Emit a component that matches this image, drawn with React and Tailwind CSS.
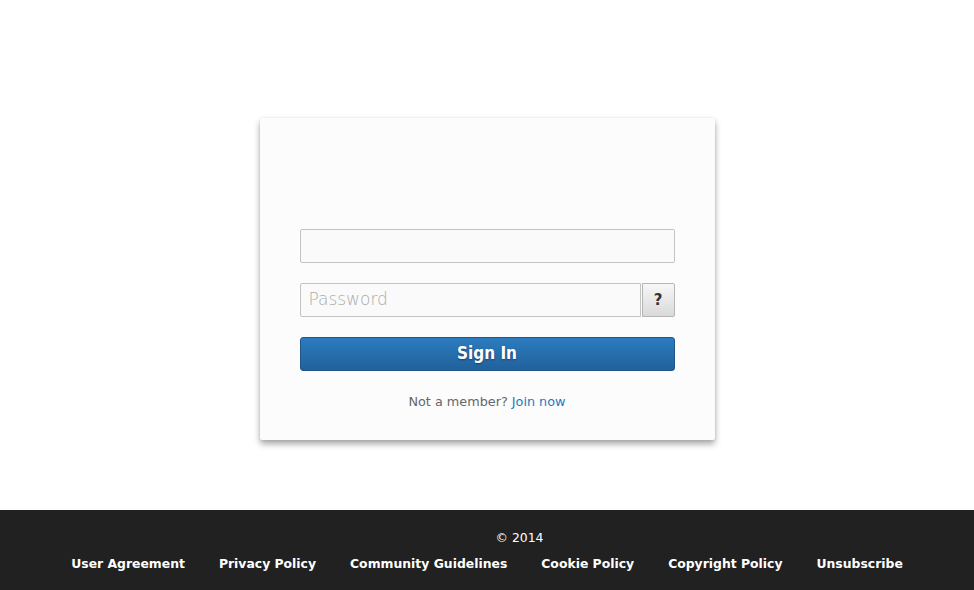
import React from 'react';

const links = ['User Agreement', 'Privacy Policy', 'Community Guidelines', 'Cookie Policy', 'Copyright Policy', 'Unsubscribe'];

const App = () => {
  return (
    <div className="h-screen flex flex-col bg-white font-['DejaVu_Sans',sans-serif]">
      {/* Sign-in card */}
      <main className="flex-1 flex justify-center pt-[118px]">
        <div className="w-[455px] h-[322px] bg-[#fcfcfc] rounded-[2px] shadow-[0_4px_6px_rgba(0,0,0,0.35),0_0_3px_rgba(0,0,0,0.08)] px-10 pt-[111px]">
          <input
            type="text"
            className="block w-full h-[34px] bg-[#fafafa] border border-[#c3c3c3] rounded-[2px] px-2 outline-none"
          />
          <div className="flex mt-5 h-[34px]">
            <input
              type="password"
              placeholder="Password"
              className="flex-1 min-w-0 bg-[#fafafa] border border-[#c3c3c3] rounded-l-[2px] px-2 text-[17px] font-extralight placeholder:text-[#ababab] outline-none"
            />
            <button className="w-[33px] ml-px bg-gradient-to-b from-[#f7f7f7] to-[#d9d9d9] border border-[#b5b5b5] rounded-r-[2px] text-[15px] font-bold text-[#333]">
              ?
            </button>
          </div>
          <button className="block w-full h-[34px] mt-5 bg-gradient-to-b from-[#2c7cbf] to-[#21619b] border border-[#1d5689] rounded-[3px] text-white text-[17px] font-bold font-['DejaVu_Sans_Condensed',sans-serif] [font-stretch:condensed] [text-shadow:0_1px_2px_rgba(0,0,0,0.4)]">
            Sign In
          </button>
          <p className="mt-[21px] text-center text-[12.8px] text-[#666]">
            Not a member? <a href="#" className="text-[#1a7bbf]">Join now</a>
          </p>
        </div>
      </main>

      {/* Footer */}
      <footer className="h-20 bg-[#212121] text-white text-[12.4px] flex flex-col items-center pt-[19px]">
        <div className="flex leading-[18px]">
          {/* logo slot, empty */}
          <span className="w-[65px]" />
          <p>© 2014</p>
        </div>
        <ul className="flex gap-[34px] mt-2 leading-[18px] font-bold">
          {links.map(l => (
            <li key={l}><a href="#">{l}</a></li>
          ))}
        </ul>
      </footer>
    </div>
  );
};

export default App;
